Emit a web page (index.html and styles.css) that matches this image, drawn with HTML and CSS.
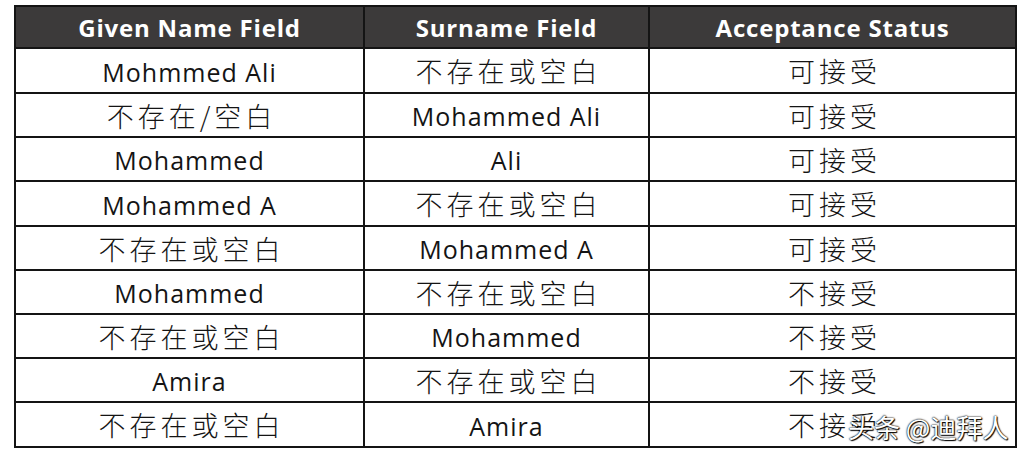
FILE: index.html
```html
<!DOCTYPE html>
<html lang="zh">
<head>
<meta charset="utf-8">
<link rel="stylesheet" href="styles.css">
</head>
<body>
<div class="page">
  <div class="grid">
    <div class="hd">Given Name Field</div>
    <div class="hd">Surname Field</div>
    <div class="hd">Acceptance Status</div>

    <div class="c en">Mohmmed Ali</div>
    <div class="c zh">不存在或空白</div>
    <div class="c zh">可接受</div>

    <div class="c zh">不存在/空白</div>
    <div class="c en">Mohammed Ali</div>
    <div class="c zh">可接受</div>

    <div class="c en">Mohammed</div>
    <div class="c en">Ali</div>
    <div class="c zh">可接受</div>

    <div class="c en">Mohammed A</div>
    <div class="c zh">不存在或空白</div>
    <div class="c zh">可接受</div>

    <div class="c zh">不存在或空白</div>
    <div class="c en">Mohammed A</div>
    <div class="c zh">可接受</div>

    <div class="c en">Mohammed</div>
    <div class="c zh">不存在或空白</div>
    <div class="c zh">不接受</div>

    <div class="c zh">不存在或空白</div>
    <div class="c en">Mohammed</div>
    <div class="c zh">不接受</div>

    <div class="c en">Amira</div>
    <div class="c zh">不存在或空白</div>
    <div class="c zh">不接受</div>

    <div class="c zh">不存在或空白</div>
    <div class="c en">Amira</div>
    <div class="c zh">不接受</div>
  </div>
  <div class="mark">头条 @迪拜人</div>
</div>
</body>
</html>
```

FILE: styles.css
```css
html, body {
  margin: 0;
  padding: 0;
  background: #ffffff;
}
.page {
  position: relative;
  width: 1030px;
  height: 456px;
  padding: 5px 0 0 14px;
  box-sizing: border-box;
}
.grid {
  display: grid;
  width: 1003px;
  box-sizing: border-box;
  grid-template-columns: 347px 283px 365px;
  grid-template-rows: 40px 43px 42px 42px 43px 42px 42px 42px 42px 43px;
  gap: 2px;
  padding: 2px;
  background: #141414;
}
.hd {
  background: #3c3a3a;
  color: #ffffff;
  font-family: "Open Sans", "Liberation Sans", sans-serif;
  font-weight: 700;
  font-size: 24px;
  letter-spacing: 0.8px;
  display: flex;
  align-items: center;
  justify-content: center;
}
.c {
  background: #ffffff;
  color: #141414;
  display: flex;
  align-items: center;
  justify-content: center;
}
.en {
  font-family: "Open Sans", "Liberation Sans", sans-serif;
  font-size: 25px;
  letter-spacing: 1px;
  padding-top: 2px;
}
.zh {
  font-family: "Noto Sans CJK SC", sans-serif;
  font-weight: 300;
  font-size: 27px;
  letter-spacing: 4px;
  padding-left: 4px;
}
.mark {
  position: absolute;
  left: 848px;
  top: 412px;
  font-family: "Noto Sans CJK SC", sans-serif;
  font-size: 26px;
  line-height: 30px;
  color: #ffffff;
  text-shadow: 0 0 2px #000, 0 0 1px #000, 1px 1px 1px #000;
  white-space: nowrap;
}
```
